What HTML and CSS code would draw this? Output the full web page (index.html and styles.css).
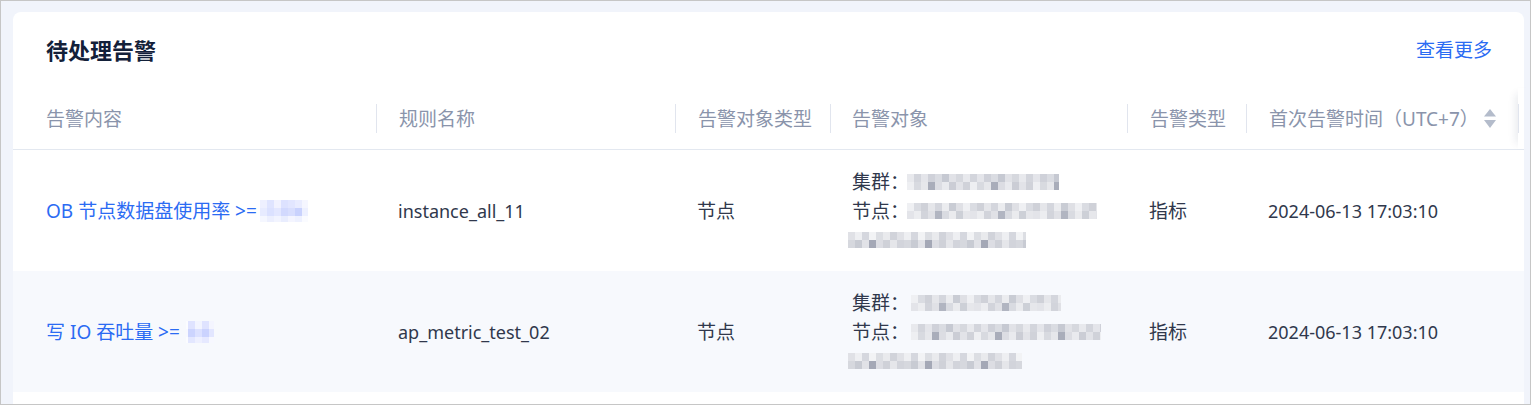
FILE: index.html
```html
<!DOCTYPE html>
<html lang="zh-CN">
<head>
<meta charset="utf-8">
<title>待处理告警</title>
<link rel="stylesheet" href="styles.css">
</head>
<body>
<div class="frame">
  <div class="card">
    <div class="card-head">
      <h2 class="title">待处理告警</h2>
      <a class="more" href="#">查看更多</a>
    </div>
    <div class="table">
      <div class="row head">
        <div class="cell first">告警内容</div>
        <div class="cell sep">规则名称</div>
        <div class="cell sep">告警对象类型</div>
        <div class="cell sep">告警对象</div>
        <div class="cell sep">告警类型</div>
        <div class="cell sep">首次告警时间（UTC+7）
          <svg class="sort" width="12" height="19" viewBox="0 0 12 19"><path d="M6 0 L12 7.5 H0 Z" fill="#b4bccb"/><path d="M0 11 H12 L6 19 Z" fill="#b4bccb"/></svg>
        </div>
        <div class="cell sep fixed"></div>
      </div>
      <div class="row body">
        <div class="cell first cjk"><a class="link" href="#">OB 节点数据盘使用率 &gt;=<span class="mosaic blue w48"></span></a></div>
        <div class="cell">instance_all_11</div>
        <div class="cell cjk">节点</div>
        <div class="cell obj cjk">
          <div class="line">集群：<span class="mosaic gray g1 w152"></span></div>
          <div class="line">节点：<span class="mosaic gray g2 w190"></span></div>
          <div class="line wrap"><span class="mosaic gray g3 w178"></span></div>
        </div>
        <div class="cell cjk">指标</div>
        <div class="cell">2024-06-13 17:03:10</div>
        <div class="cell fixed"></div>
      </div>
      <div class="row body alt">
        <div class="cell first cjk"><a class="link" href="#">写 IO 吞吐量 &gt;=<span class="mosaic blue w28"></span></a></div>
        <div class="cell">ap_metric_test_02</div>
        <div class="cell cjk">节点</div>
        <div class="cell obj cjk">
          <div class="line">集群：<span class="mosaic gray g2 w150 shift"></span></div>
          <div class="line">节点：<span class="mosaic gray g1 w190 shift"></span></div>
          <div class="line wrap"><span class="mosaic gray g3 w174"></span></div>
        </div>
        <div class="cell cjk">指标</div>
        <div class="cell">2024-06-13 17:03:10</div>
        <div class="cell fixed"></div>
      </div>
    </div>
  </div>
</div>
</body>
</html>
```

FILE: styles.css
```css
* { box-sizing: border-box; }
html, body { margin: 0; padding: 0; }
body {
  font-family: "Noto Sans", "Noto Sans CJK SC", sans-serif;
  font-size: 18px;
  color: #30384c;
}
.frame {
  width: 1531px;
  height: 405px;
  border: 1px solid #c6c6c6;
  background: #f1f4fb;
  padding: 11px 6px 0 12px;
  overflow: hidden;
}
.card {
  background: #fff;
  border-radius: 8px 8px 0 0;
  height: 400px;
}
.card-head {
  height: 76px;
  display: flex;
  align-items: center;
  justify-content: space-between;
  padding: 0 32px 0 33px;
}
.title {
  margin: 0;
  font-size: 22px;
  font-weight: 700;
  color: #132039;
  line-height: 30px;
}
.more {
  color: #2b6bf3;
  text-decoration: none;
  font-size: 19px;
  line-height: 26px;
}
.row {
  display: grid;
  grid-template-columns: 363px 299px 155px 297px 119px 272px 1fr;
}
.head {
  height: 62px;
  border-bottom: 1px solid #e3e8f0;
  color: #8a94ab;
  font-size: 19px;
}
.body {
  height: 121px;
  background: #fff;
}
.body.alt { background: #f7f9fd; }
.cell {
  display: flex;
  align-items: center;
  padding-left: 22px;
  white-space: nowrap;
  line-height: 26px;
}
.cell.cjk { font-size: 19px; }
.cell.first { padding-left: 33px; }
.head .cell.sep { padding-left: 0; }
.head .cell.sep::before {
  content: "";
  width: 1px;
  height: 29px;
  background: #e1e5ee;
  margin-right: 22px;
  flex: none;
}
.head .cell:nth-child(4)::before { margin-right: 21px; }
.sort { margin-left: auto; margin-right: 22px; flex: none; }
.fixed {
  padding-left: 0;
  box-shadow: -8px 0 8px -6px rgba(20, 40, 80, 0.10);
}
.link {
  color: #2b6bf3;
  text-decoration: none;
  display: inline-flex;
  align-items: center;
}
.obj {
  flex-direction: column;
  align-items: flex-start;
  justify-content: center;
}
.line {
  display: flex;
  align-items: center;
  height: 29px;
}
.line.wrap { margin-left: -2px; }
.mosaic {
  display: inline-block;
  flex: none;
}
.mosaic.blue {
  height: 22px;
  margin-left: 3px;
  background:
    repeating-linear-gradient(90deg, #eef0ff 0 7px, #dfe4ff 7px 14px, #f1f2ff 14px 21px, #dde2ff 21px 28px, #e2e6ff 28px 35px, #e9ecff 35px 42px, #f5f6ff 42px 49px) 0 0 / 100% 8px no-repeat,
    repeating-linear-gradient(90deg, #e7ebff 0 7px, #dbe1ff 7px 14px, #e3e7ff 14px 21px, #d2d9fe 21px 28px, #d8defe 28px 35px, #c9d2fd 35px 42px, #edf0ff 42px 49px) 0 8px / 100% 8px no-repeat,
    repeating-linear-gradient(90deg, #f5f7ff 0 7px, #eceffe 7px 14px, #f2f4ff 14px 21px, #e9edfe 21px 28px, #f4f5ff 28px 35px, #eef1ff 35px 42px, #fafbff 42px 49px) 0 16px / 100% 6px no-repeat;
}
.mosaic.w48 { width: 48px; }
.mosaic.w28 {
  width: 28px;
  margin-left: 6px;
  background:
    linear-gradient(90deg, #fbfcff 0 2px, #dfe3ff 2px 9px, #f2f4ff 9px 16px, #dfe3ff 16px 23px, #f4f5ff 23px 28px) 0 0 / 100% 8px no-repeat,
    linear-gradient(90deg, #f7f8ff 0 2px, #ccd4fe 2px 9px, #dce1ff 9px 16px, #cbd3fe 16px 23px, #e2e6ff 23px 28px) 0 8px / 100% 8px no-repeat,
    linear-gradient(90deg, #fbfcff 0 2px, #e3e7ff 2px 9px, #eef0ff 9px 16px, #e6e9ff 16px 23px, #f7f8ff 23px 28px) 0 16px / 100% 6px no-repeat;
}
.mosaic.gray {
  height: 16px;
  margin-left: -2px;
}
.mosaic.shift { margin-left: 2px; }
.mosaic.g1 {
  background:
    repeating-linear-gradient(90deg, #e8e9ed 0 7px, #d3d5dc 7px 14px, #e4e5ea 14px 21px, #cfd1d9 21px 28px, #dadce2 28px 35px, #c6c9d2 35px 42px, #e1e2e7 42px 49px, #d6d8de 49px 56px) 0 0 / 100% 8px no-repeat,
    repeating-linear-gradient(90deg, #eeeff2 0 7px, #d8dae0 7px 14px, #e6e7eb 14px 21px, #a9adba 21px 28px, #dcdde3 28px 35px, #e9eaee 35px 42px, #cbcdd5 42px 49px, #e2e3e8 49px 56px, #d0d2d9 56px 63px) 0 8px / 100% 8px no-repeat;
}
.mosaic.g2 {
  background:
    repeating-linear-gradient(90deg, #eff0f3 0 7px, #dadce2 7px 14px, #cfd1d8 14px 21px, #e5e6ea 21px 28px, #d4d6dd 28px 35px, #ebecef 35px 42px, #c9ccd4 42px 49px, #dfe0e5 49px 56px) 0 0 / 100% 8px no-repeat,
    repeating-linear-gradient(90deg, #e3e4e9 0 7px, #ecedf0 7px 14px, #d2d4db 14px 21px, #e0e1e6 21px 28px, #b1b5c1 28px 35px, #d9dbe1 35px 42px, #eaebee 42px 49px, #cdd0d7 49px 56px, #e6e7eb 56px 63px) 0 8px / 100% 8px no-repeat;
}
.mosaic.g3 {
  background:
    repeating-linear-gradient(90deg, #e0e1e6 0 7px, #eeeff2 7px 14px, #d5d7de 14px 21px, #f2f3f5 21px 28px, #dcdee3 28px 35px, #e9eaed 35px 42px, #d1d3da 42px 49px) 0 0 / 100% 8px no-repeat,
    repeating-linear-gradient(90deg, #d6d8de 0 7px, #c8cbd3 7px 14px, #e1e2e7 14px 21px, #a4a8b6 21px 28px, #dcdde3 28px 35px, #cfd1d8 35px 42px, #e5e6ea 42px 49px, #d2d4db 49px 56px) 0 8px / 100% 8px no-repeat;
}
.mosaic.w152 { width: 152px; }
.mosaic.w150 { width: 150px; }
.mosaic.w190 { width: 190px; }
.mosaic.w178 { width: 178px; }
.mosaic.w174 { width: 174px; }
```
